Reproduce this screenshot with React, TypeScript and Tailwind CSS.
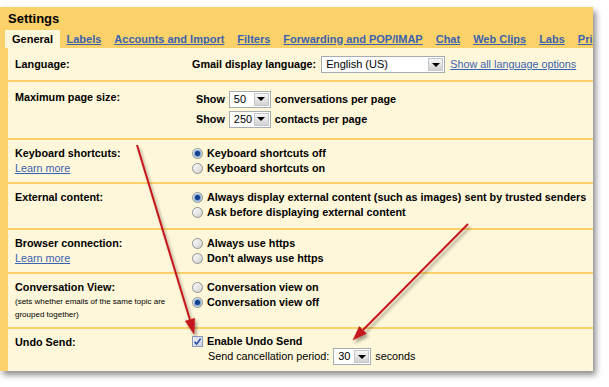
import React from "react";

const YELLOW = "bg-[#fbd26a]";

function Select({ value, className }: { value: string; className: string }) {
  return (
    <span className={`inline-flex h-[17px] items-stretch border border-[#a5acb2] bg-white ${className}`}>
      <span className="flex-1 pl-[4px] text-[11px] font-normal leading-[15px] text-black">{value}</span>
      <span className="m-[1px] flex w-[15px] items-center justify-center border border-[#c4c7cb] bg-gradient-to-b from-[#f6f6f6] to-[#d2d2d2]">
        <span className="h-0 w-0 border-l-[4px] border-r-[4px] border-t-[4px] border-l-transparent border-r-transparent border-t-black" />
      </span>
    </span>
  );
}

function Radio({ checked, label }: { checked?: boolean; label: string }) {
  return (
    <div className="flex h-[15px] items-center gap-[4px]">
      <span className="flex h-[11px] w-[11px] shrink-0 items-center justify-center rounded-full border border-[#8f9090] bg-gradient-to-br from-white to-[#cfcfcf]">
        {checked && <span className="h-[5px] w-[5px] rounded-full bg-[#153f86] shadow-[0_0_1px_1px_#5f9ad8]" />}
      </span>
      <span className="font-bold">{label}</span>
    </div>
  );
}

function Row({ label, children, first, extra, className = "" }: { label: string; children: React.ReactNode; first?: boolean; extra?: React.ReactNode; className?: string }) {
  return (
    <div className={`flex px-[7px] ${first ? "" : "border-t-2 border-[#fbd26a]"} ${className}`}>
      <div className="w-[177px] shrink-0">
        <div className="font-bold">{label}</div>
        {extra}
      </div>
      <div className="flex-1">{children}</div>
    </div>
  );
}

const LearnMore = () => <div className="text-[#3a62b0] underline">Learn more</div>;

export default function App() {
  // last tab is cut at the panel edge in the screenshot
  const tabs = ["Labels", "Accounts and Import", "Filters", "Forwarding and POP/IMAP", "Chat", "Web Clips", "Labs", "Pri"];

  return (
    <div className="relative h-[387px] w-[609px] overflow-hidden bg-white font-['Liberation_Sans',Arial,sans-serif] text-[10.8px] leading-[15px] text-black">
      <div className={`mt-[7px] w-[593px] overflow-hidden ${YELLOW} shadow-[3px_4px_6px_rgba(0,0,0,0.45)]`}>
        <div className="h-[23px] pl-[8px] pt-[4px] text-[13px] font-bold leading-[16px]">Settings</div>
        <div className="flex h-[18px] items-center whitespace-nowrap pl-[5px] text-[11px]">
          <div className="flex h-full items-center bg-[#fff7d9] px-[7px] font-bold">General</div>
          {tabs.map((t) => (
            <span key={t} className="px-[6.5px] font-bold text-[#3a62b0] underline">
              {t}
            </span>
          ))}
        </div>

        <div className="ml-[8px] bg-[#fff7d9]">
          <Row first label="Language:" className="items-center pb-[7px] pt-[8px]">
            <div className="flex h-[17px] items-center">
              <span className="font-bold">Gmail display language:</span>
              <Select value="English (US)" className="ml-[5px] w-[124px]" />
              <span className="ml-[5px] text-[#3a62b0] underline">Show all language options</span>
            </div>
          </Row>

          <Row label="Maximum page size:" className="pb-[10px] pt-[8px]">
            <div className="flex flex-col gap-[2px] pl-[4px]">
              <div className="flex h-[18px] items-center gap-[4px] font-bold">
                Show <Select value="50" className="w-[42px]" /> conversations per page
              </div>
              <div className="flex h-[18px] items-center gap-[4px] font-bold">
                Show <Select value="250" className="w-[42px]" /> contacts per page
              </div>
            </div>
          </Row>

          <Row label="Keyboard shortcuts:" extra={<LearnMore />} className="pb-[6px] pt-[6px]">
            <Radio checked label="Keyboard shortcuts off" />
            <Radio label="Keyboard shortcuts on" />
          </Row>

          <Row label="External content:" className="pb-[8px] pt-[6px]">
            <div className="whitespace-nowrap">
              <Radio checked label="Always display external content (such as images) sent by trusted senders" />
              <Radio label="Ask before displaying external content" />
            </div>
          </Row>

          <Row label="Browser connection:" extra={<LearnMore />} className="pb-[6px] pt-[6px]">
            <Radio label="Always use https" />
            <Radio label="Don't always use https" />
          </Row>

          <Row
            label="Conversation View:"
            extra={
              <div className="text-[8px] leading-[13px]">
                (sets whether emails of the same topic are
                <br />
                grouped together)
              </div>
            }
            className="pb-[6px] pt-[6px]"
          >
            <Radio label="Conversation view on" />
            <Radio checked label="Conversation view off" />
          </Row>

          <Row label="Undo Send:" className="pb-[6px] pt-[6px]">
            <div className="flex h-[13px] items-center gap-[4px]">
              <span className="flex h-[11px] w-[11px] shrink-0 items-center justify-center border border-[#8d9bbb] bg-gradient-to-br from-[#eef1f7] to-[#c9d1e2]">
                <svg width="9" height="9" viewBox="0 0 9 9">
                  <path d="M1.5 4.8 L3.6 7 L7.6 1.6" fill="none" stroke="#2447a8" strokeWidth="1.5" />
                </svg>
              </span>
              <span className="font-bold">Enable Undo Send</span>
            </div>
            <div className="flex h-[17px] items-center gap-[4px] pl-[16px]">
              <span>Send cancellation period:</span>
              <Select value="30" className="w-[38px]" />
              <span>seconds</span>
            </div>
          </Row>
        </div>
      </div>

      <svg className="pointer-events-none absolute inset-0" width="609" height="387" viewBox="0 0 609 387">
        <defs>
          <filter id="sh" x="-20%" y="-20%" width="140%" height="140%">
            <feDropShadow dx="2" dy="3" stdDeviation="1.5" floodColor="#000" floodOpacity="0.35" />
          </filter>
        </defs>
        <g filter="url(#sh)" fill="#c4161c" stroke="#c4161c">
          <line x1="137" y1="145" x2="190" y2="320" strokeWidth="2" />
          <polygon points="194,334 185.2,321 194.8,318.2" strokeWidth="0.5" />
          <line x1="468" y1="224" x2="363" y2="330" strokeWidth="2" />
          <polygon points="353,340 359.3,326.5 366.4,333.6" strokeWidth="0.5" />
        </g>
      </svg>
    </div>
  );
}
